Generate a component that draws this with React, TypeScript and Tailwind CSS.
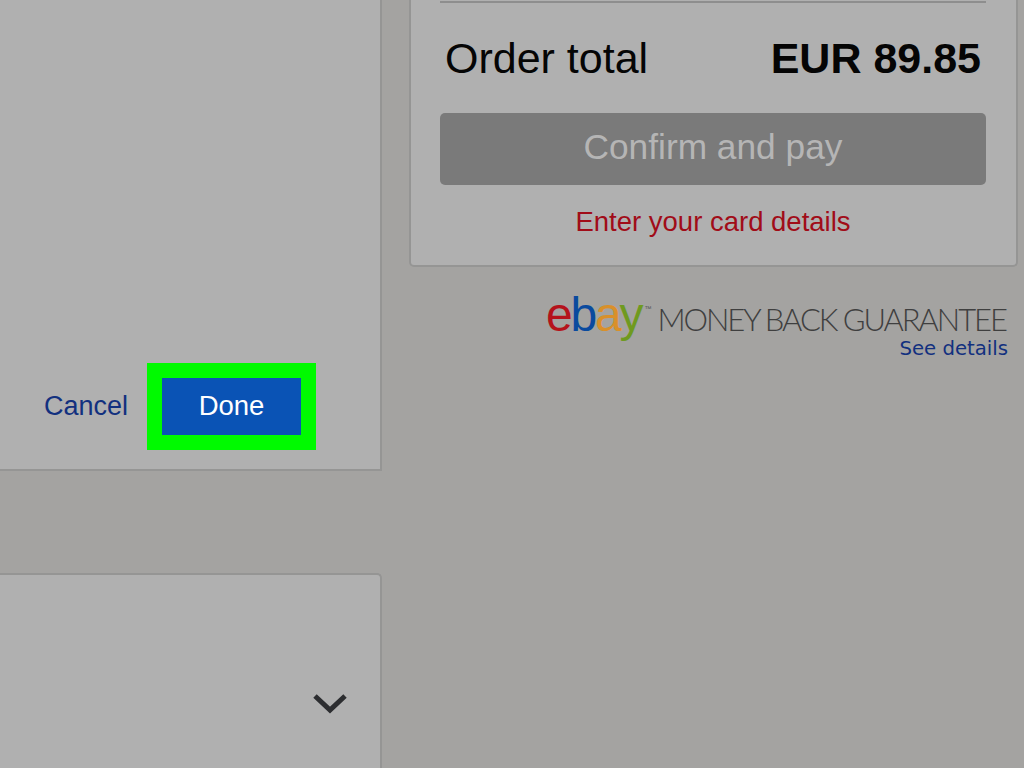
const ARIAL = "font-['Liberation_Sans',Arial,sans-serif]"

export default function App() {
  return (
    <div className={`flex h-[768px] w-[1024px] overflow-hidden bg-[#a4a3a1] ${ARIAL}`}>
      <LeftColumn />
      <RightColumn />
    </div>
  )
}

function LeftColumn() {
  return (
    <div className="flex w-[382px] shrink-0 flex-col">
      <div className="flex h-[471px] items-end justify-end gap-[19px] border-r-2 border-b-2 border-[#959594] bg-[#b0b0b0] pr-[64px] pb-[19px]">
        <a className="mb-[28px] text-[27px] leading-[32px] text-[#12307f]">Cancel</a>
        <div className="border-[15px] border-[#00fa00]">
          <button className="h-[57px] w-[139px] bg-[#0a53b5] pb-[2px] text-[27.5px] leading-none text-white">
            Done
          </button>
        </div>
      </div>

      <div className="mt-[102px] flex flex-1 justify-end rounded-tr-[5px] border-t-2 border-r-2 border-[#959594] bg-[#b0b0b0] pt-[117px] pr-[31px]">
        <svg width="38" height="24" viewBox="0 0 38 24" fill="none" className="text-[#2c2d30]">
          <path d="M4 4 L19 18 L34 4" stroke="currentColor" strokeWidth="5" />
        </svg>
      </div>
    </div>
  )
}

function RightColumn() {
  return (
    <div className="ml-[27px] w-[609px] shrink-0">
      <div className="h-[267px] rounded-b-[5px] border-x-2 border-b-2 border-[#959594] bg-[#b0b0b0] pt-px pr-[30px] pl-[29px]">
        <div className="h-[2px] bg-[#8e8e8e]" />
        <div className="mt-[30px] flex items-center justify-between pr-[5px] pl-[5px] text-[43px] leading-[50px] text-[#050505]">
          <span>Order total</span>
          <span className="font-bold">EUR 89.85</span>
        </div>
        <button className="mt-[30px] h-[72px] w-full rounded-[5px] bg-[#7a7a7a] pb-[4px] text-[35.3px] leading-none text-[#b5b5b5]">
          Confirm and pay
        </button>
        <p className="mt-[21px] text-center text-[27.5px] leading-[32px] text-[#a10c18]">
          Enter your card details
        </p>
      </div>

      <div className="flex flex-col items-end pt-[24px] pr-[10px]">
        <div className="flex h-[48px] items-baseline pr-[2px]">
          <EbayLogo />
          <span className="ml-[6px] font-['Lato',sans-serif] text-[31px] leading-none font-light tracking-[-2.05px] whitespace-nowrap text-[#3f3f3f]">
            MONEY BACK GUARANTEE
          </span>
        </div>
        <a className="mt-[-1px] font-['DejaVu_Sans',sans-serif] text-[19.7px] leading-[22px] text-[#12307f]">
          See details
        </a>
      </div>
    </div>
  )
}

function EbayLogo() {
  return (
    <span className="flex items-baseline text-[48px] leading-none tracking-[-2.2px]">
      <span className="text-[#b5121b]">e</span>
      <span className="text-[#0a4a9e]">b</span>
      <span className="text-[#d9902a]">a</span>
      <span className="text-[#6f9a1f]">y</span>
      <span className="ml-[3px] -translate-y-[20px] text-[7px] leading-none tracking-normal text-[#555]">™</span>
    </span>
  )
}
